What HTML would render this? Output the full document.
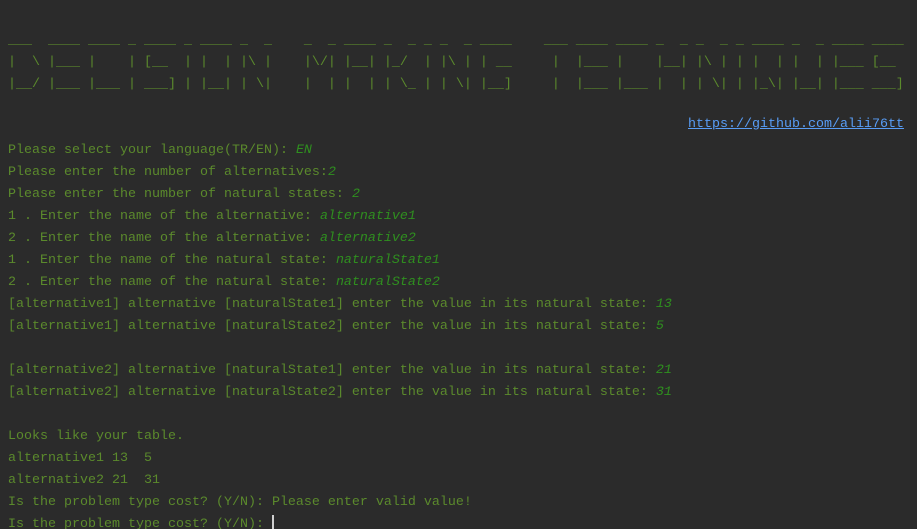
<!DOCTYPE html>
<html><head><meta charset="utf-8"><style>
html,body{margin:0;padding:0;background:#2b2b2b;width:917px;height:529px;overflow:hidden}
pre{margin:0;padding:30px 0 0 8px;font-family:"Liberation Mono",monospace;font-size:13.33px;line-height:22px;color:#5b8a2c;white-space:pre}
i{color:#2f8f1f}
a{color:#589df6;text-decoration:underline;position:absolute;left:688px;top:114px;font-family:"Liberation Mono",monospace;font-size:13.33px;line-height:22px}
.c{display:inline-block;width:2px;height:15px;background:#d0d0d0;vertical-align:-3px}
</style></head><body>
<pre>___  ____ ____ _ ____ _ ____ _  _    _  _ ____ _  _ _ _  _ ____    ___ ____ ____ _  _ _  _ _ ____ _  _ ____ ____ 
|  \ |___ |    | [__  | |  | |\ |    |\/| |__| |_/  | |\ | | __     |  |___ |    |__| |\ | | |  | |  | |___ [__  
|__/ |___ |___ | ___] | |__| | \|    |  | |  | | \_ | | \| |__]     |  |___ |___ |  | | \| | |_\| |__| |___ ___] 


Please select your language(TR/EN): <i>EN</i>
Please enter the number of alternatives:<i>2</i>
Please enter the number of natural states: <i>2</i>
1 . Enter the name of the alternative: <i>alternative1</i>
2 . Enter the name of the alternative: <i>alternative2</i>
1 . Enter the name of the natural state: <i>naturalState1</i>
2 . Enter the name of the natural state: <i>naturalState2</i>
[alternative1] alternative [naturalState1] enter the value in its natural state: <i>13</i>
[alternative1] alternative [naturalState2] enter the value in its natural state: <i>5</i>

[alternative2] alternative [naturalState1] enter the value in its natural state: <i>21</i>
[alternative2] alternative [naturalState2] enter the value in its natural state: <i>31</i>

Looks like your table.
alternative1 13  5
alternative2 21  31
Is the problem type cost? (Y/N): Please enter valid value!
Is the problem type cost? (Y/N): <span class="c"></span></pre>
<a>https://github.com/alii76tt</a>
</body></html>
